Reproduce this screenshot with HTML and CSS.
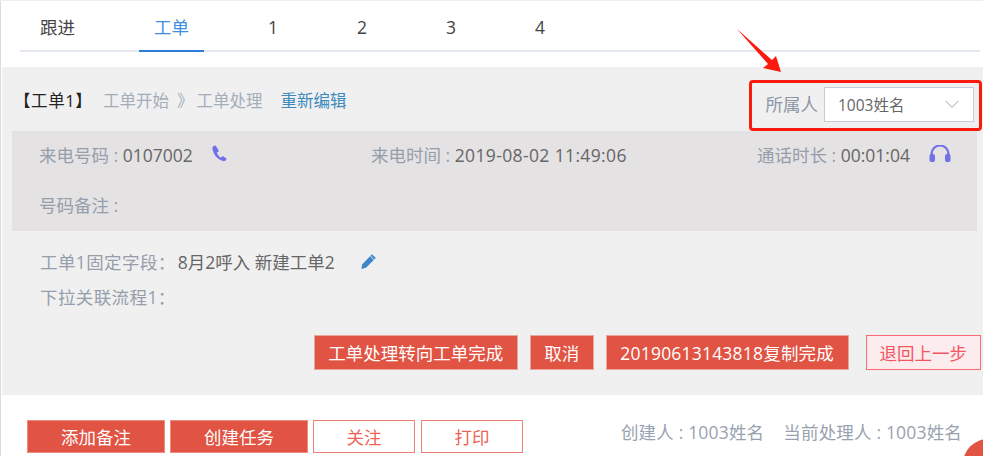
FILE: index.html
```html
<!DOCTYPE html>
<html lang="zh">
<head>
<meta charset="utf-8">
<title>工单</title>
<link rel="stylesheet" href="styles.css">
</head>
<body>
<div class="page">
  <nav class="tabs">
    <a class="tab">跟进</a>
    <a class="tab active">工单</a>
    <a class="tab">1</a>
    <a class="tab">2</a>
    <a class="tab">3</a>
    <a class="tab">4</a>
  </nav>
  <section class="panel">
    <header class="head">
      <div class="crumbs">
        <b class="title">【工单1】</b>
        <span class="step">工单开始</span>
        <span class="step sep">》</span>
        <span class="step">工单处理</span>
        <a class="link">重新编辑</a>
      </div>
      <div class="owner">
        <span class="owner-label">所属人</span>
        <div class="select">
          <span>1003姓名</span>
          <svg class="chev" width="14" height="9" viewBox="0 0 14 9"><path d="M.7 1l6.300 6.500L13.300 1" fill="none" stroke="#c3cad6" stroke-width="1.200"/></svg>
        </div>
      </div>
    </header>
    <div class="info">
      <div class="info-row">
        <div class="cell c1"><span class="label">来电号码 : </span><span class="value">0107002</span>
          <svg class="ico phone" width="17" height="17" viewBox="0 0 17 17"><path d="M3.200 .7C1.900 1.200 1.200 2.500 1.500 4.200c.6 3.200 2.300 6.300 4.500 8.400 1.800 1.700 4.200 3.200 6.100 3.500 1.500.2 2.600-.3 3.200-1.500.3-.5.1-1-.3-1.300l-2.600-1.900c-.5-.3-1-.2-1.300.1l-.9 1c-.2.2-.4.2-.6.1-1.500-.9-3-2.900-3.600-4.600-.1-.3 0-.5.200-.6l1.100-.8c.4-.3.5-.7.4-1.200L5 1.300C4.700.6 3.900.4 3.200.7z" fill="#6f6fe8"/></svg>
        </div>
        <div class="cell c2"><span class="label">来电时间 : </span><span class="value stamp">2019-08-02 11:49:06</span></div>
        <div class="cell c3"><span class="label">通话时长 : </span><span class="value">00:01:04</span>
          <svg class="ico head-ico" width="24" height="18" viewBox="0 0 24 18"><path d="M3.500 11V9a8.500 8.500 0 0 1 17 0v2" fill="none" stroke="#6f6fe8" stroke-width="2.200"/><rect x="1.500" y="9" width="5.500" height="8" rx="2" fill="#6f6fe8"/><rect x="17" y="9" width="5.500" height="8" rx="2" fill="#6f6fe8"/></svg>
        </div>
      </div>
      <div class="info-row"><div class="cell"><span class="label">号码备注 :</span></div></div>
    </div>
    <div class="fields">
      <div class="field"><span class="label field-label">工单1固定字段：</span><span class="value">8月2呼入 新建工单2</span>
        <svg class="pen" width="17" height="17" viewBox="0 0 17 17"><path d="M12 1.200 15.800 5 6 14.800 1.300 16l1-4.800z" fill="#3f86c9"/><path d="M10.300 3 14 6.700" stroke="#f0f0f0" stroke-width="1"/></svg>
      </div>
      <div class="field"><span class="label field-label">下拉关联流程1：</span></div>
    </div>
    <div class="actions">
      <button class="btn solid">工单处理转向工单完成</button>
      <button class="btn solid">取消</button>
      <button class="btn solid copy">20190613143818复制完成</button>
      <button class="btn back">退回上一步</button>
    </div>
  </section>
  <footer class="foot">
    <div class="foot-btns">
      <button class="fbtn wide solid">添加备注</button>
      <button class="fbtn wide solid">创建任务</button>
      <button class="fbtn outline">关注</button>
      <button class="fbtn outline">打印</button>
    </div>
    <div class="meta"><span>创建人 : 1003姓名</span><span>当前处理人 : 1003姓名</span></div>
  </footer>
  <div class="mark-box"></div>
  <svg class="mark-arrow" width="46" height="45" viewBox="0 0 46 45"><path d="M0 0 35 31 39 27 44 43 26 39 31 35z" fill="#fb1a0e"/></svg>
  <div class="corner"></div>
</div>
</body>
</html>
```
FILE: styles.css
```css
* { box-sizing: border-box; }
html, body { margin: 0; padding: 0; background: #fff; }
body {
  font-family: "Open Sans", "Noto Sans CJK SC", "Liberation Sans", sans-serif;
  font-size: 17.5px;
  color: #666;
}
.page {
  position: relative;
  width: 983px;
  height: 456px;
  overflow: hidden;
  padding-left: 2px;
  border-top: 1px solid #eceef0;
  box-shadow: inset 1px 0 0 #dcdcdc;
}
.tabs {
  display: flex;
  gap: 49px;
  height: 51px;
  margin: 0 3px 15px 18px;
  padding-left: 5px;
  border-bottom: 2px solid #e4e8f0;
}
.tab {
  padding: 0 15px;
  height: 51px;
  line-height: 53px;
  color: #444;
  white-space: nowrap;
}
.tab.active {
  color: #3d8ee0;
  border-bottom: 2px solid #2a7ed8;
}
.panel {
  height: 328px;
  background: #f0f0f0;
  padding: 0 6px 0 10px;
}
.head {
  display: flex;
  justify-content: space-between;
  height: 64px;
  padding: 20px 3px 0 5px;
}
.crumbs { display: flex; align-items: center; height: 25px; font-size: 16.5px; }
.title { font-weight: 400; color: #222; width: 89px; margin-left: -3px; letter-spacing: .6px; }
.step { color: #a4adb9; }
.sep { margin: 0 3px 0 8px; }
.link { color: #3d8abf; margin-left: 18px; }
.owner { display: flex; align-items: center; gap: 5px; height: 35px; }
.owner-label { color: #8b95a3; margin: 0 1px 2px -1px; }
.select {
  display: flex;
  align-items: center;
  justify-content: space-between;
  width: 150px;
  height: 35px;
  padding: 0 14px 0 13px;
  background: #fff;
  border: 1px solid #c5ccd8;
  font-size: 15.5px;
}
.info {
  height: 100px;
  background: #e4e2e3;
  padding: 0 25px 0 27px;
}
.info-row { display: flex; height: 51px; align-items: center; }
.info-row:first-child { height: 47px; }
.info-row + .info-row { height: 53px; }
.cell { display: flex; align-items: center; white-space: pre; }
.c1 { width: 332px; }
.c2 { width: 386px; }
.label { color: #959eab; }
.value { color: #666; }
.stamp { letter-spacing: .37px; }
.ico { margin-left: 18px; }
.phone { margin-top: -2px; }
.head-ico { margin-top: -1px; }
.fields { padding: 13px 0 0 28px; height: 104px; }
.field { display: flex; align-items: center; height: 35px; }
.field-label { letter-spacing: .4px; margin-right: 2px; }
.pen { margin-left: 25px; }
.actions { display: flex; justify-content: flex-end; gap: 12px; margin-right: -4px; }
.btn, .fbtn {
  font: inherit;
  cursor: pointer;
  white-space: nowrap;
}
.btn { height: 35px; padding: 0 13.5px; }
.copy { letter-spacing: .2px; }
.solid {
  background: #e15343;
  color: #fff;
  border: 1px solid #e9a69d;
}
.back {
  margin-left: 5px;
  padding: 0 13px;
  background: #fdeced;
  color: #f55563;
  border: 1px solid #fb6a75;
}
.foot {
  display: flex;
  justify-content: space-between;
  align-items: flex-start;
  padding: 25px 21px 0 25px;
}
.foot-btns { display: flex; gap: 5px; }
.fbtn { width: 102px; height: 33px; padding: 0; }
.fbtn.wide { width: 138px; border-color: #ec8b80; }
.outline { background: #fff; color: #ec6457; border: 1px solid #ee7f74; }
.outline:last-child { margin-left: 1px; }
.meta { display: flex; gap: 19px; color: #98a2b0; line-height: 24px; letter-spacing: .18px; }
.mark-box {
  position: absolute;
  left: 749px;
  top: 79px;
  width: 233px;
  height: 51px;
  border: 3px solid #fb1a0e;
  border-radius: 4px;
}
.mark-arrow { position: absolute; left: 737px; top: 28px; }
.corner {
  position: absolute;
  left: 963px;
  top: 438px;
  width: 50px;
  height: 50px;
  border-radius: 50%;
  background: #e15343;
}
```
